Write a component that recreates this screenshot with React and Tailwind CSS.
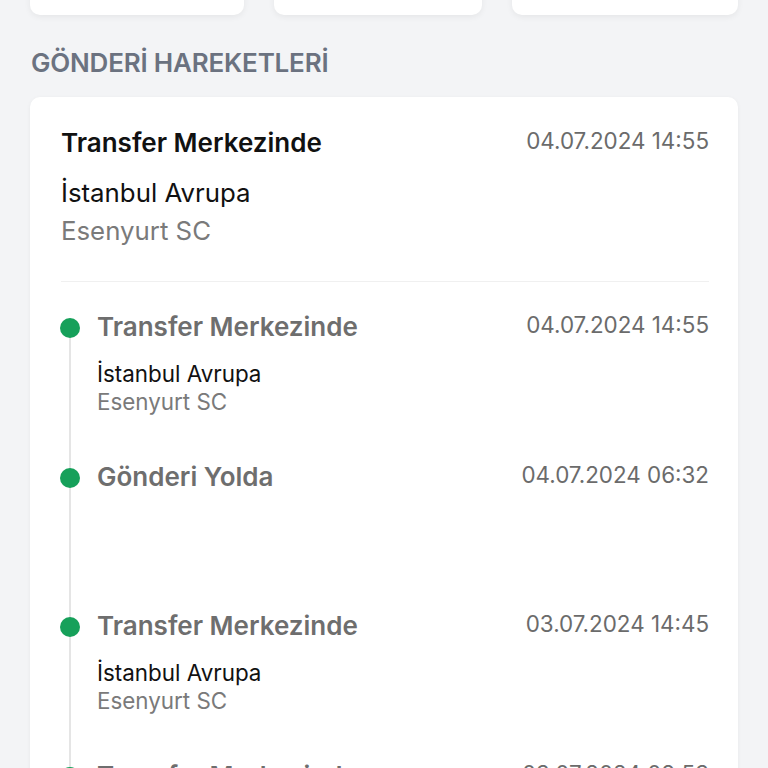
import React from "react";

const items = [
  { title: "Transfer Merkezinde", date: "04.07.2024 14:55", city: "İstanbul Avrupa", branch: "Esenyurt SC" },
  { title: "Gönderi Yolda", date: "04.07.2024 06:32" },
  { title: "Transfer Merkezinde", date: "03.07.2024 14:45", city: "İstanbul Avrupa", branch: "Esenyurt SC" },
  { title: "Transfer Merkezinde", date: "03.07.2024 08:53", city: "İstanbul Avrupa", branch: "Esenyurt SC" },
];

export default function App() {
  return (
    <div className="h-[768px] overflow-hidden bg-[#f3f4f6] px-[30px]" style={{ fontFamily: "Inter, 'Noto Sans', sans-serif" }}>
      <div className="flex gap-[30px] mt-[-45px]">
        <div className="h-[60px] w-[214px] bg-white rounded-[10px] shadow-[0_2px_6px_rgba(0,0,0,0.06)]" />
        <div className="h-[60px] w-[208px] bg-white rounded-[10px] shadow-[0_2px_6px_rgba(0,0,0,0.06)]" />
        <div className="h-[60px] w-[226px] bg-white rounded-[10px] shadow-[0_2px_6px_rgba(0,0,0,0.06)]" />
      </div>
      <h2 className="mt-[32px] text-[26px] leading-[32px] font-semibold text-[#6b7280] tracking-[-0.2px] pl-[1px]">GÖNDERİ HAREKETLERİ</h2>
      <div className="mt-[18px] bg-white rounded-[10px] shadow-[0_1px_4px_rgba(0,0,0,0.05)] pl-[31px] pr-[29px] pt-[30px]">
        <div className="flex justify-between items-start">
          <div className="text-[26px] leading-[32px] font-semibold text-[#111111]">Transfer Merkezinde</div>
          <div className="text-[22.4px] leading-[28px] text-[#6b6b6b]">04.07.2024 14:55</div>
        </div>
        <div className="mt-[18px] text-[25.8px] leading-[32px] text-[#111111]">İstanbul Avrupa</div>
        <div className="mt-[6px] text-[25.8px] leading-[32px] text-[#7a7a7a]">Esenyurt SC</div>
        <div className="mt-[34px] h-px bg-[#f0f0f0]" />
        <div className="pt-[29px]">
          {items.map((it, i) => (
            <div key={i} className="relative h-[149.5px] pl-[36px]">
              <div className="absolute left-[8px] top-[17px] bottom-[-17px] w-[2px] bg-[#e5e5e5]" />
              <div className="absolute left-[-1px] top-[7px] w-[20px] h-[20px] rounded-full bg-[#16a05a]" />
              <div className="flex justify-between items-start">
                <div className="text-[26px] leading-[32px] font-semibold text-[#6e6e6e]">{it.title}</div>
                <div className="text-[22.4px] leading-[28px] text-[#6b6b6b]">{it.date}</div>
              </div>
              {it.city && (
                <>
                  <div className="mt-[17px] text-[22.4px] leading-[28px] text-[#111111]">{it.city}</div>
                  <div className="text-[22.4px] leading-[28px] text-[#7a7a7a]">{it.branch}</div>
                </>
              )}
            </div>
          ))}
        </div>
      </div>
    </div>
  );
}
